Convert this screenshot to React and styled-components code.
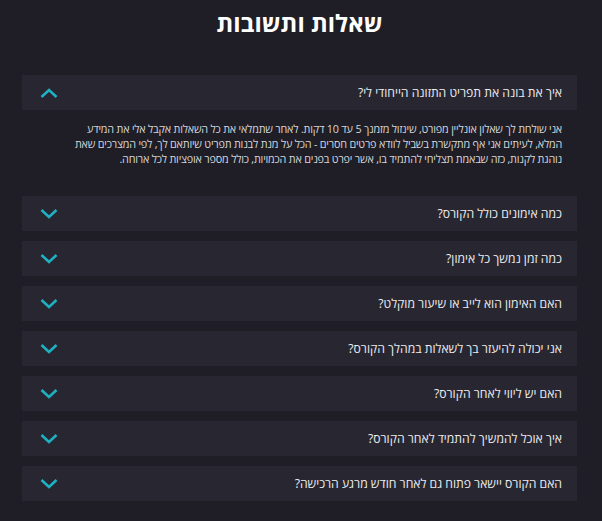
import React from "react";
import styled, { createGlobalStyle } from "styled-components";

const GlobalStyles = createGlobalStyle`
  html, body {
    margin: 0;
    padding: 0;
    background: #1f1e27;
  }
  body {
    font-family: "Open Sans", "DejaVu Sans", sans-serif;
  }
`;

const Page = styled.div`
  width: 602px;
  height: 521px;
  background: #1f1e27;
  padding: 6px 25px 0 22px;
  box-sizing: border-box;
  direction: rtl;
`;

const Title = styled.h2`
  margin: 0 0 35px;
  text-align: center;
  color: #ffffff;
  font-size: 24px;
  font-weight: 700;
  line-height: 34px;
`;

const List = styled.div`
  display: flex;
  flex-direction: column;
  gap: 10px;
`;

const Item = styled.div`
  display: flex;
  flex-direction: column;
`;

const Header = styled.div`
  height: 35px;
  background: #282731;
  display: flex;
  align-items: center;
  justify-content: space-between;
  padding: 0 15px 0 17px;
  cursor: pointer;
`;

const Question = styled.span`
  color: #ececef;
  font-size: 12.2px;
`;

const Answer = styled.p`
  margin: 0;
  padding: 11px 15px 20px 42px;
  color: #d6d6da;
  font-size: 10.8px;
  letter-spacing: -0.2px;
  line-height: 15px;
`;

const Chevron = ({ open }) => (
  <svg width="20" height="12" viewBox="0 0 20 12">
    <path
      d={open ? "M2.5 10 L10 3 L17.5 10" : "M2.5 2 L10 9 L17.5 2"}
      fill="none"
      stroke="#1fb0c2"
      strokeWidth="2.6"
    />
  </svg>
);

const faqs = [
  {
    q: "איך את בונה את תפריט התזונה הייחודי לי?",
    a: "אני שולחת לך שאלון אונליין מפורט, שינזול מזמנך 5 עד 10 דקות. לאחר שתמלאי את כל השאלות אקבל אלי את המידע המלא, לעיתים אני אף מתקשרת בשביל לוודא פרטים חסרים - הכל על מנת לבנות תפריט שיותאם לך, לפי המצרכים שאת נוהגת לקנות, כזה שבאמת תצליחי להתמיד בו, אשר יפרט בפנים את הכמויות, כולל מספר אופציות לכל ארוחה.",
  },
  { q: "כמה אימונים כולל הקורס?" },
  { q: "כמה זמן נמשך כל אימון?" },
  { q: "האם האימון הוא לייב או שיעור מוקלט?" },
  { q: "אני יכולה להיעזר בך לשאלות במהלך הקורס?" },
  { q: "האם יש ליווי לאחר הקורס?" },
  { q: "איך אוכל להמשיך להתמיד לאחר הקורס?" },
  { q: "האם הקורס יישאר פתוח גם לאחר חודש מרגע הרכישה?" },
];

export default function App() {
  const [openIdx, setOpenIdx] = React.useState(0);
  return (
    <Page>
      <GlobalStyles />
      <Title>שאלות ותשובות</Title>
      <List>
        {faqs.map((f, i) => (
          <Item key={i}>
            <Header onClick={() => setOpenIdx(openIdx === i ? -1 : i)}>
              <Question>{f.q}</Question>
              <Chevron open={openIdx === i} />
            </Header>
            {openIdx === i && f.a && <Answer>{f.a}</Answer>}
          </Item>
        ))}
      </List>
    </Page>
  );
}
